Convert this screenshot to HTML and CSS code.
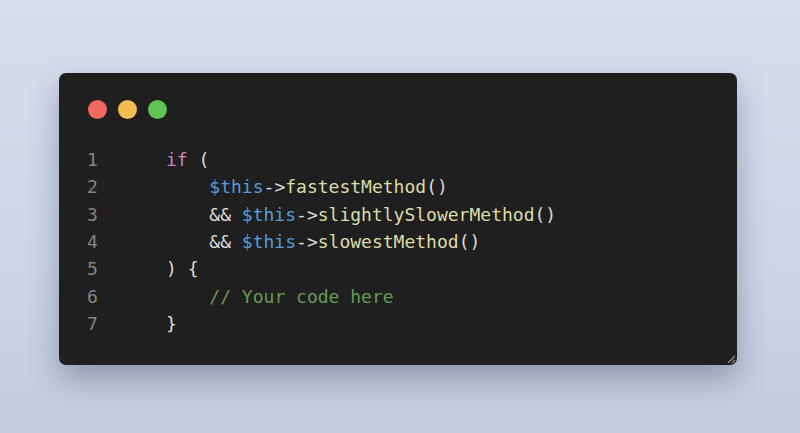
FILE: index.html
```html
<!DOCTYPE html>
<html>
<head>
<meta charset="utf-8">
<link rel="stylesheet" href="styles.css">
</head>
<body>
<div class="card">
  <div class="dots">
    <span class="dot red"></span>
    <span class="dot yellow"></span>
    <span class="dot green"></span>
  </div>
  <div class="code">
    <div class="line"><span class="ln">1</span><span class="src"><span class="kw">if</span> (</span></div>
    <div class="line"><span class="ln">2</span><span class="src">    <span class="var">$this</span>-&gt;<span class="fn">fastestMethod</span>()</span></div>
    <div class="line"><span class="ln">3</span><span class="src">    &amp;&amp; <span class="var">$this</span>-&gt;<span class="fn">slightlySlowerMethod</span>()</span></div>
    <div class="line"><span class="ln">4</span><span class="src">    &amp;&amp; <span class="var">$this</span>-&gt;<span class="fn">slowestMethod</span>()</span></div>
    <div class="line"><span class="ln">5</span><span class="src">) {</span></div>
    <div class="line"><span class="ln">6</span><span class="src">    <span class="cm">// Your code here</span></span></div>
    <div class="line"><span class="ln">7</span><span class="src">}</span></div>
  </div>
  <svg class="grip" width="10" height="10" viewBox="0 0 10 10">
    <line x1="9" y1="2" x2="2" y2="9" stroke="#8a8a8a" stroke-width="1.2"/>
    <line x1="9" y1="6" x2="6" y2="9" stroke="#8a8a8a" stroke-width="1.2"/>
  </svg>
</div>
</body>
</html>
```

FILE: styles.css
```css
html, body {
  margin: 0;
  height: 100%;
}
body {
  width: 800px;
  height: 433px;
  box-sizing: border-box;
  padding: 73px 0 0 59px;
  background: linear-gradient(180deg, #d7deee 0%, #cdd5e6 60%, #c3cbdd 100%);
  overflow: hidden;
}
.card {
  position: relative;
  width: 678px;
  height: 292px;
  box-sizing: border-box;
  background: #1f1f1f;
  border-radius: 7px;
  padding: 27px 0 0 29px;
  box-shadow: 0 14px 30px rgba(40, 50, 80, 0.35);
}
.dots {
  display: flex;
  gap: 11px;
  height: 20px;
}
.dot {
  width: 19px;
  height: 19px;
  border-radius: 50%;
}
.red { background: #ee6a5f; }
.yellow { background: #f5bd4f; }
.green { background: #61c454; }
.code {
  margin-top: 26px;
  margin-left: -1px;
  font-family: "DejaVu Sans Mono", monospace;
  font-size: 18px;
  line-height: 27.33px;
  color: #dcdcdc;
}
.line {
  display: flex;
  white-space: pre;
}
.ln {
  width: 79px;
  color: #858585;
}
.kw { color: #c586c0; }
.var { color: #569cd6; }
.fn { color: #dcdcaa; }
.cm { color: #6a9955; }
.grip {
  position: absolute;
  right: 1px;
  bottom: 1px;
}
```
